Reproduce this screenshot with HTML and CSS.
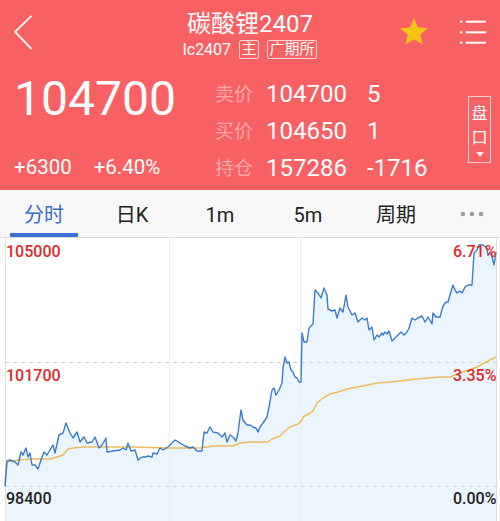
FILE: index.html
```html
<!DOCTYPE html>
<html lang="zh-CN">
<head>
    <meta charset="UTF-8">
    <meta name="viewport" content="width=device-width, initial-scale=1.0">
    <title>碳酸锂2407</title>
    <link rel="stylesheet" href="styles.css">
</head>
<body>
    <header class="header">
        <div class="topbar">
            <div class="back">
                <svg width="22" height="36" viewBox="0 0 22 36">
                    <polyline points="19,2.3 3,17.8 19,34.3" fill="none" stroke="#fff" stroke-width="1.8" stroke-linecap="round" stroke-linejoin="round"/>
                </svg>
            </div>
            <div class="title-block">
                <div class="title">碳酸锂2407</div>
                <div class="sub">
                    <span>lc2407</span>
                    <span class="tag">主</span>
                    <span class="tag">广期所</span>
                </div>
            </div>
            <div class="actions">
                <svg class="star" width="28" height="26.6" viewBox="2 2 20 19">
                    <path d="M12 17.27L18.18 21l-1.64-7.03L22 9.24l-7.19-.61L12 2 9.19 8.63 2 9.24l5.46 4.73L5.82 21z" fill="#f7c316"/>
                </svg>
                <svg class="menu" width="30" height="30" viewBox="0 0 30 30">
                    <rect x="2" y="3.7" width="2.4" height="2" fill="#fff"/>
                    <rect x="2" y="14.3" width="2.4" height="2" fill="#fff"/>
                    <rect x="2" y="24.7" width="2.4" height="2" fill="#fff"/>
                    <line x1="7.7" y1="4.7" x2="28" y2="4.7" stroke="#fff" stroke-width="2"/>
                    <line x1="7.7" y1="15.3" x2="28" y2="15.3" stroke="#fff" stroke-width="2"/>
                    <line x1="7.7" y1="25.7" x2="28" y2="25.7" stroke="#fff" stroke-width="2"/>
                </svg>
            </div>
        </div>

        <div class="quote">
            <div class="main">
                <div class="price">104700</div>
                <div class="change">
                    <span>+6300</span>
                    <span>+6.40%</span>
                </div>
            </div>
            <div class="book">
                <div class="row"><span class="label">卖价</span><span class="val">104700</span><span>5</span></div>
                <div class="row"><span class="label">买价</span><span class="val">104650</span><span>1</span></div>
                <div class="row"><span class="label">持仓</span><span class="val">157286</span><span>-1716</span></div>
            </div>
            <div class="pankou">
                <span>盘</span>
                <span>口</span>
                <i class="arrow"></i>
            </div>
        </div>
    </header>

    <nav class="tabs">
        <div class="tab active">分时</div>
        <div class="tab">日K</div>
        <div class="tab">1m</div>
        <div class="tab">5m</div>
        <div class="tab">周期</div>
        <div class="tab more">
            <svg width="24" height="6" viewBox="0 0 24 6">
                <circle cx="3" cy="3" r="2.2" fill="#9a9a9a"/>
                <circle cx="12" cy="3" r="2.2" fill="#9a9a9a"/>
                <circle cx="21" cy="3" r="2.2" fill="#9a9a9a"/>
            </svg>
        </div>
    </nav>

    <svg class="chart" width="500" height="283" viewBox="0 238 500 283">
        <polygon class="area" points="5,486 7,461 10,460 15,462 18,465 21,452 23,455 26,448 28,457 30,453 32,465 35,465 38,469 41,460 44,452 47,455 50,450 53,445 55,453 59,435 63,433 66,423 70,433 73,438 77,432 80,442 84,437 87,443 92,442 95,437 99,448 102,445 106,438 107,452 113,451 120,450 123,448 126,450 128,443 131,451 135,450 138,460 142,457 145,457 148,456 152,457 153,453 157,454 160,448 163,450 168,447 175,440 180,443 185,446 190,448 193,447 197,451 202,451 204,432 207,433 210,427 213,432 218,433 222,437 225,433 227,442 230,435 233,437 236,441 238,433 241,410 243,420 247,425 250,425 253,427 256,428 258,432 260,427 263,423 267,417 269,407 272,390 274,388 276,395 279,390 282,383 283,368 285,357 287,363 289,362 291,370 293,372 295,377 297,378 299,382 301,382 302,333 304,342 307,342 309,328 312,325 313,324 315,290 318,293 321,298 324,288 327,295 328,309 332,311 335,310 337,318 340,308 343,312 346,295 348,307 352,315 355,313 358,322 362,318 365,320 367,318 369,330 372,327 374,340 377,335 379,337 382,333 383,335 385,332 387,334 389,331 392,341 395,338 398,335 401,332 404,335 407,332 409,328 412,318 415,320 418,318 422,316 425,322 428,317 432,324 433,313 436,317 440,317 443,306 446,302 448,302 450,295 453,285 455,290 457,293 460,291 462,293 465,287 468,285 472,285 474,253 477,250 479,245 483,245 487,248 488,255 491,253 492,257 494,265 496,252 496,530 5,530"/>
        <line class="grid" x1="169.5" y1="238" x2="169.5" y2="521"/>
        <line class="grid" x1="300.5" y1="238" x2="300.5" y2="521"/>
        <line class="border" x1="5.5" y1="238" x2="5.5" y2="521"/>
        <line class="border" x1="496.5" y1="238" x2="496.5" y2="521"/>
        <line class="dash" x1="5" y1="362.5" x2="497" y2="362.5"/>
        <line class="dash" x1="5" y1="486.5" x2="497" y2="486.5"/>
        <polyline class="avg" points="5,486 7,462 12,461 20,460 33,459 50,459 57,457 63,455 68,449 73,448 83,447 100,447 133,447 167,448 200,448 207,447 213,446 233,446 240,443 250,442 268,442 272,439 280,436 283,433 290,427 298,424 302,420 303,417 310,413 313,411 317,403 323,398 330,394 338,392 347,389 363,386 377,383 390,382 417,379 440,377 450,377 463,372 477,367 490,360 496,357"/>
        <polyline class="line" points="5,486 7,461 10,460 15,462 18,465 21,452 23,455 26,448 28,457 30,453 32,465 35,465 38,469 41,460 44,452 47,455 50,450 53,445 55,453 59,435 63,433 66,423 70,433 73,438 77,432 80,442 84,437 87,443 92,442 95,437 99,448 102,445 106,438 107,452 113,451 120,450 123,448 126,450 128,443 131,451 135,450 138,460 142,457 145,457 148,456 152,457 153,453 157,454 160,448 163,450 168,447 175,440 180,443 185,446 190,448 193,447 197,451 202,451 204,432 207,433 210,427 213,432 218,433 222,437 225,433 227,442 230,435 233,437 236,441 238,433 241,410 243,420 247,425 250,425 253,427 256,428 258,432 260,427 263,423 267,417 269,407 272,390 274,388 276,395 279,390 282,383 283,368 285,357 287,363 289,362 291,370 293,372 295,377 297,378 299,382 301,382 302,333 304,342 307,342 309,328 312,325 313,324 315,290 318,293 321,298 324,288 327,295 328,309 332,311 335,310 337,318 340,308 343,312 346,295 348,307 352,315 355,313 358,322 362,318 365,320 367,318 369,330 372,327 374,340 377,335 379,337 382,333 383,335 385,332 387,334 389,331 392,341 395,338 398,335 401,332 404,335 407,332 409,328 412,318 415,320 418,318 422,316 425,322 428,317 432,324 433,313 436,317 440,317 443,306 446,302 448,302 450,295 453,285 455,290 457,293 460,291 462,293 465,287 468,285 472,285 474,253 477,250 479,245 483,245 487,248 488,255 491,253 492,257 494,265 496,252"/>
        <text class="up" x="6" y="256.5">105000</text>
        <text class="up" x="6" y="380.5">101700</text>
        <text class="flat" x="6" y="504">98400</text>
        <text class="up" x="496.5" y="256.5" text-anchor="end">6.71%</text>
        <text class="up" x="496.5" y="380.5" text-anchor="end">3.35%</text>
        <text class="flat" x="496.5" y="504" text-anchor="end">0.00%</text>
    </svg>
</body>
</html>
```

FILE: styles.css
```css
:root {
    --red: #f86164;
    --blue: #3a6cc6;
    --pale: rgba(255, 255, 255, 0.45);
}

* {
    box-sizing: border-box;
}

body {
    margin: 0;
    width: 500px;
    height: 521px;
    overflow: hidden;
    background: #fff;
    font-family: Roboto, "Noto Sans CJK SC", sans-serif;
    color: #222;
}

.header {
    background: var(--red);
    color: #fff;
    height: 190px;
}

.topbar {
    display: grid;
    grid-template-columns: 1fr auto 1fr;
    height: 64px;
}

.back svg {
    display: block;
    margin: 14px 0 0 12px;
}

.title-block {
    padding-top: 9.5px;
    text-align: center;
}

.title {
    font-size: 24px;
    line-height: 28px;
}

.sub {
    display: flex;
    align-items: center;
    justify-content: center;
    gap: 8px;
    height: 19px;
    margin-top: 2px;
    font-size: 16px;
}

.tag {
    border: 1px solid rgba(255, 255, 255, 0.75);
    border-radius: 2px;
    padding: 0 1.5px;
    font-size: 15px;
    line-height: 17px;
}

.actions {
    display: flex;
    justify-content: flex-end;
    align-items: flex-start;
    padding: 17px 12px 0 0;
}

.star {
    margin: 1px 30px 0 0;
}

.quote {
    display: flex;
    height: 126px;
}

.main {
    width: 215px;
    padding: 6px 0 0 14px;
}

.price {
    font-size: 48px;
    line-height: 57px;
}

.change {
    display: flex;
    gap: 22px;
    margin-top: 28px;
    font-size: 20.5px;
    line-height: 24px;
}

.book {
    padding-top: 12px;
}

.row {
    display: flex;
    font-size: 24px;
    line-height: 37px;
}

.label {
    width: 51px;
    font-size: 19px;
    color: var(--pale);
}

.val {
    width: 101px;
}

.pankou {
    display: flex;
    flex-direction: column;
    align-items: center;
    width: 23px;
    height: 67px;
    margin: 32px 9px 0 auto;
    padding-top: 5px;
    border: 1px solid rgba(255, 255, 255, 0.7);
    font-size: 16px;
    line-height: 24px;
}

.arrow {
    width: 0;
    height: 0;
    margin-top: 2px;
    border-left: 4px solid transparent;
    border-right: 4px solid transparent;
    border-top: 5px solid rgba(255, 255, 255, 0.85);
}

.tabs {
    display: grid;
    grid-template-columns: repeat(5, 88px) 1fr;
    height: 48px;
    background: #f8f8f8;
    border-bottom: 1px solid #ddd;
}

.tab {
    display: flex;
    flex-direction: column;
    align-items: center;
    padding-top: 7px;
    font-size: 20px;
    line-height: 36px;
    color: #222;
}

.tab.active {
    color: var(--blue);
}

.tab.active::after {
    content: "";
    align-self: stretch;
    height: 4px;
    margin: 0 10px;
    background: #3b73d5;
}

.tab.more {
    align-items: flex-end;
    justify-content: center;
    padding: 0 16px 0 0;
}

.chart {
    display: block;
}

.area {
    fill: #eaf5fd;
}

.grid {
    stroke: #eeeeee;
    stroke-width: 1;
}

.border {
    stroke: #e2e2e2;
    stroke-width: 1;
}

.dash {
    stroke: #d2d2d2;
    stroke-width: 1;
    stroke-dasharray: 4 4;
}

.avg {
    fill: none;
    stroke: #f0bb5c;
    stroke-width: 1.5;
}

.line {
    fill: none;
    stroke: #3a7dc8;
    stroke-width: 1.4;
    stroke-linejoin: round;
}

.chart text {
    font-family: Roboto, sans-serif;
    font-size: 16px;
    font-weight: 500;
}

.up {
    fill: #e0272b;
}

.flat {
    fill: #222;
}
```
